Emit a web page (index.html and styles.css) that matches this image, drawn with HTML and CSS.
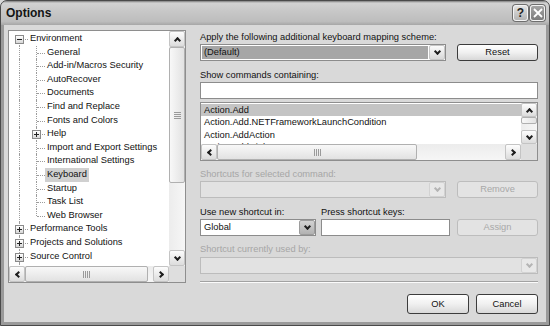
FILE: index.html
```html
<!DOCTYPE html>
<html lang="en">
<head>
    <meta charset="UTF-8">
    <title>Options</title>
    <link rel="stylesheet" href="styles.css">
</head>
<body>
    <div class="window">
        <div class="titlebar">
            <span class="title">Options</span>
            <div class="caption-btns">
                <span class="cap-btn help">?</span>
                <span class="cap-btn close">
                    <svg width="10" height="10" viewBox="0 0 10 10"><path d="M1 1 L9 9 M9 1 L1 9" stroke="#fff" stroke-width="1.8" fill="none"/></svg>
                </span>
            </div>
        </div>

        <div class="client">
            <div class="tree-box">
                <div class="tree">
                    <div class="node"><span class="cell f"><span class="box minus"></span></span><span class="text">Environment</span></div>
                    <div class="node"><span class="cell v"></span><span class="cell t"></span><span class="text">General</span></div>
                    <div class="node"><span class="cell v"></span><span class="cell t"></span><span class="text">Add-in/Macros Security</span></div>
                    <div class="node"><span class="cell v"></span><span class="cell t"></span><span class="text">AutoRecover</span></div>
                    <div class="node"><span class="cell v"></span><span class="cell t"></span><span class="text">Documents</span></div>
                    <div class="node"><span class="cell v"></span><span class="cell t"></span><span class="text">Find and Replace</span></div>
                    <div class="node"><span class="cell v"></span><span class="cell t"></span><span class="text">Fonts and Colors</span></div>
                    <div class="node"><span class="cell v"></span><span class="cell t"><span class="box plus"></span></span><span class="text">Help</span></div>
                    <div class="node"><span class="cell v"></span><span class="cell t"></span><span class="text">Import and Export Settings</span></div>
                    <div class="node"><span class="cell v"></span><span class="cell t"></span><span class="text">International Settings</span></div>
                    <div class="node"><span class="cell v"></span><span class="cell t"></span><span class="text sel">Keyboard</span></div>
                    <div class="node"><span class="cell v"></span><span class="cell t"></span><span class="text">Startup</span></div>
                    <div class="node"><span class="cell v"></span><span class="cell t"></span><span class="text">Task List</span></div>
                    <div class="node"><span class="cell v"></span><span class="cell l"></span><span class="text">Web Browser</span></div>
                    <div class="node"><span class="cell t"><span class="box plus"></span></span><span class="text">Performance Tools</span></div>
                    <div class="node"><span class="cell t"><span class="box plus"></span></span><span class="text">Projects and Solutions</span></div>
                    <div class="node"><span class="cell t"><span class="box plus"></span></span><span class="text">Source Control</span></div>
                    <div class="node"><span class="cell v"></span></div>
                </div>
                <div class="vscroll tree-v">
                    <span class="sb-btn"><span class="chev up"></span></span>
                    <span class="thumb"><span class="grip rows"></span></span>
                    <span class="track"></span>
                    <span class="sb-btn"><span class="chev down"></span></span>
                </div>
                <div class="hscroll tree-h">
                    <span class="sb-btn"><span class="chev left"></span></span>
                    <span class="thumb"><span class="grip cols"></span></span>
                    <span class="track"></span>
                    <span class="sb-btn"><span class="chev right"></span></span>
                </div>
                <div class="corner"></div>
            </div>

            <div class="panel">
                <div class="label first">Apply the following additional keyboard mapping scheme:</div>
                <div class="row">
                    <div class="combo focus wide">
                        <span class="value">(Default)</span>
                        <span class="drop"><span class="chev down"></span></span>
                    </div>
                    <span class="btn">Reset</span>
                </div>

                <div class="label gap-lg">Show commands containing:</div>
                <div class="input"></div>

                <div class="list">
                    <div class="items">
                        <div class="item sel">Action.Add</div>
                        <div class="item">Action.Add.NETFrameworkLaunchCondition</div>
                        <div class="item">Action.AddAction</div>
                        <div class="item">Action.AddDialog</div>
                    </div>
                    <div class="vscroll list-v">
                        <span class="sb-btn"><span class="chev up"></span></span>
                        <span class="thumb"></span>
                        <span class="track"></span>
                        <span class="sb-btn"><span class="chev down"></span></span>
                    </div>
                    <div class="hscroll list-h">
                        <span class="sb-btn"><span class="chev left"></span></span>
                        <span class="thumb"><span class="grip cols"></span></span>
                        <span class="track"></span>
                        <span class="sb-btn"><span class="chev right"></span></span>
                    </div>
                    <div class="corner"></div>
                </div>

                <div class="label gap-md muted">Shortcuts for selected command:</div>
                <div class="row">
                    <div class="combo disabled wide">
                        <span class="value"></span>
                        <span class="drop"><span class="chev down"></span></span>
                    </div>
                    <span class="btn disabled">Remove</span>
                </div>

                <div class="row-split gap-lg">
                    <div class="label">Use new shortcut in:</div>
                    <div class="label">Press shortcut keys:</div>
                </div>
                <div class="row-split">
                    <div class="combo">
                        <span class="value">Global</span>
                        <span class="drop hot"><span class="chev down"></span></span>
                    </div>
                    <div class="input"></div>
                    <span class="btn disabled">Assign</span>
                </div>

                <div class="label gap-md muted">Shortcut currently used by:</div>
                <div class="combo disabled full">
                    <span class="value"></span>
                    <span class="drop"><span class="chev down"></span></span>
                </div>

                <div class="separator"></div>

                <div class="footer">
                    <span class="btn dlg">OK</span>
                    <span class="btn dlg">Cancel</span>
                </div>
            </div>
        </div>
    </div>
</body>
</html>
```

FILE: styles.css
```css
body {
    margin: 0;
    font-family: 'Liberation Sans', Arial, sans-serif;
    font-size: 9.3px;
    color: #111;
    background: #d9d9d9;
}
.window {
    width: 550px;
    height: 326px;
    box-sizing: border-box;
    border: 1px solid #4a4a4a;
    border-radius: 7px 7px 0 0;
    background: #9a9a9a;
    padding: 0 3px 3px;
    display: flex;
    flex-direction: column;
    overflow: hidden;
}
.titlebar {
    height: 24px;
    flex: none;
    margin: 0 -3px;
    padding: 0 4px 0 5px;
    display: flex;
    align-items: center;
    justify-content: space-between;
    background: linear-gradient(#7e7e7e 0, #d2d2d2 2px, #c8c8c8 40%, #bdbdbd 85%, #a6a6a6 100%);
}
.title {
    font-weight: bold;
    font-size: 12px;
    color: #141414;
}
.caption-btns {
    display: flex;
    gap: 2px;
}
.cap-btn {
    width: 15px;
    height: 16px;
    box-sizing: border-box;
    border: 1px solid #f4f4f4;
    border-radius: 3px;
    box-shadow: 0 0 0 1px #6e6e6e;
    display: flex;
    align-items: center;
    justify-content: center;
}
.cap-btn.help {
    background: linear-gradient(#e2e2e2, #b4b4b4);
    font-weight: bold;
    font-size: 12px;
    color: #222;
}
.cap-btn.close {
    background: linear-gradient(#a4a4a4, #7c7c7c);
}

.client {
    flex: 1;
    background: #d9d9d9;
    display: flex;
    gap: 14px;
    padding: 5px 8px 0 4px;
}

/* tree */
.tree-box {
    width: 178px;
    height: 253px;
    box-sizing: border-box;
    border: 1px solid #8e8e8e;
    background: #fff;
    display: grid;
    grid-template-columns: 160px 16px;
    grid-template-rows: 235px 16px;
}
.tree {
    padding: 1px 0 0 2px;
    overflow: hidden;
}
.node {
    display: flex;
    height: 13.6px;
    line-height: 13.6px;
    white-space: nowrap;
}
.cell {
    width: 17px;
    flex: none;
    position: relative;
}
.cell::before {
    content: "";
    position: absolute;
    left: 8px;
    top: 0;
    bottom: 0;
    border-left: 1px dotted #9c9c9c;
}
.cell.f::before {
    top: 7px;
}
.cell.l::before {
    bottom: auto;
    height: 7px;
}
.cell.t::after,
.cell.f::after,
.cell.l::after {
    content: "";
    position: absolute;
    left: 9px;
    right: 0;
    top: 7px;
    border-top: 1px dotted #9c9c9c;
}
.box {
    position: absolute;
    left: 4px;
    top: 3px;
    width: 9px;
    height: 9px;
    box-sizing: border-box;
    border: 1px solid #8a8a8a;
    background: linear-gradient(#fff, #d6d6d6);
    z-index: 1;
}
.box::before {
    content: "";
    position: absolute;
    left: 1px;
    top: 3px;
    width: 5px;
    height: 1px;
    background: #222;
}
.box.plus::after {
    content: "";
    position: absolute;
    left: 3px;
    top: 1px;
    width: 1px;
    height: 5px;
    background: #222;
}
.text {
    padding: 0 2px;
}
.text.sel {
    background: #d0d0d0;
}

/* scroll bars */
.vscroll,
.hscroll {
    display: flex;
    background: linear-gradient(to right, #ececec, #f6f6f6);
}
.vscroll {
    flex-direction: column;
}
.hscroll {
    background: linear-gradient(#ececec, #f6f6f6);
}
.sb-btn {
    flex: none;
    width: 16px;
    height: 16px;
    box-sizing: border-box;
    border: 1px solid #c4c4c4;
    border-radius: 2px;
    background: linear-gradient(#fdfdfd, #dcdcdc);
    display: flex;
    align-items: center;
    justify-content: center;
}
.thumb {
    flex: none;
    box-sizing: border-box;
    border: 1px solid #b0b0b0;
    border-radius: 2px;
    background: linear-gradient(to right, #f8f8f8, #e2e2e2);
    display: flex;
    align-items: center;
    justify-content: center;
}
.hscroll .thumb {
    background: linear-gradient(#f8f8f8, #e2e2e2);
}
.track {
    flex: 1;
}
.tree-v .thumb {
    height: 136px;
}
.tree-h .thumb {
    width: 123px;
}
.grip {
    width: 7px;
    height: 7px;
}
.grip.rows {
    background: repeating-linear-gradient(#9a9a9a 0 1px, transparent 1px 2px);
}
.grip.cols {
    background: repeating-linear-gradient(to right, #9a9a9a 0 1px, transparent 1px 2px);
}
.corner {
    background: #dedede;
}
.chev {
    width: 3px;
    height: 3px;
    border: solid #1e1e1e;
    border-width: 2px 2px 0 0;
}
.chev.up {
    transform: translateY(1px) rotate(-45deg);
}
.chev.down {
    transform: translateY(-1px) rotate(135deg);
}
.chev.left {
    transform: translateX(1px) rotate(-135deg);
}
.chev.right {
    transform: translateX(-1px) rotate(45deg);
}

/* right panel */
.panel {
    width: 338px;
    display: flex;
    flex-direction: column;
}
.label {
    height: 12px;
    line-height: 12px;
    white-space: nowrap;
    margin-bottom: 1px;
}
.label.first {
    margin-top: 1px;
}
.gap-lg {
    margin-top: 8px;
}
.gap-md {
    margin-top: 7px;
}
.muted {
    color: #a6a6a6;
}
.row {
    display: flex;
    gap: 11px;
}
.row-split {
    display: grid;
    grid-template-columns: 116px 129px 81px;
    column-gap: 5px;
}
.row-split > .btn {
    margin-left: 2px;
}
.combo {
    height: 17px;
    box-sizing: border-box;
    border: 1px solid #8c8c8c;
    background: #fff;
    display: flex;
}
.combo.wide {
    width: 246px;
}
.combo.full {
    margin-top: 1px;
}
.combo .value {
    flex: 1;
    padding-left: 3px;
    line-height: 15px;
}
.combo.focus .value {
    background: #a6a6a6;
    margin: 1px 1px 1px 1px;
    padding-left: 2px;
    line-height: 13px;
}
.combo .drop {
    width: 16px;
    flex: none;
    box-sizing: border-box;
    border: 1px solid #c6c6c6;
    border-radius: 2px;
    background: linear-gradient(#fbfbfb, #d8d8d8);
    display: flex;
    align-items: center;
    justify-content: center;
}
.combo .drop.hot {
    background: linear-gradient(#d2d2d2, #b2b2b2);
    border-color: #9c9c9c;
}
.combo.disabled {
    background: #e2e2e2;
    border-color: #bcbcbc;
}
.combo.disabled .drop {
    background: #e8e8e8;
    border-color: #d2d2d2;
}
.combo.disabled .chev {
    border-color: #b4b4b4;
}
.input {
    height: 17px;
    box-sizing: border-box;
    border: 1px solid #8c8c8c;
    background: #fff;
}
.btn {
    width: 81px;
    height: 17px;
    box-sizing: border-box;
    border: 1px solid #3c3c3c;
    border-radius: 3px;
    background: linear-gradient(#ffffff, #f0f0f0 50%, #d8d8d8);
    text-align: center;
    line-height: 15px;
    flex: none;
}
.btn.disabled {
    border-color: #bdbdbd;
    color: #a8a8a8;
    background: #e3e3e3;
}
.btn.dlg {
    width: 62px;
    height: 20px;
    line-height: 18px;
}

.list {
    margin-top: 3px;
    height: 59px;
    box-sizing: border-box;
    border: 1px solid #8e8e8e;
    background: #fff;
    display: grid;
    grid-template-columns: 1fr 16px;
    grid-template-rows: 41px 16px;
}
.items {
    overflow: hidden;
    padding-top: 1px;
}
.item {
    height: 12.3px;
    line-height: 12.3px;
    padding-left: 3px;
    white-space: nowrap;
}
.item.sel {
    background: #c4c4c4;
}
.list-v .sb-btn {
    height: 14px;
}
.list-v .thumb {
    height: 7px;
}
.list-h .thumb {
    width: 200px;
}

.separator {
    margin-top: 7px;
    border-top: 1px solid #a2a2a2;
    border-bottom: 1px solid #fbfbfb;
}
.footer {
    margin-top: 11px;
    display: flex;
    justify-content: flex-end;
    gap: 7px;
}
```
